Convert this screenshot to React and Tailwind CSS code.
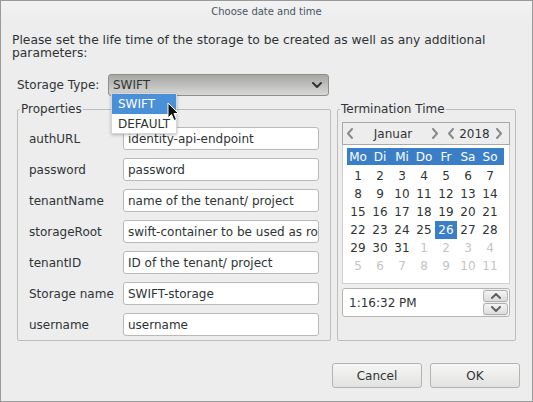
import React from "react";

function Chev({ dir = "left", color = "#8a8a8a", className = "" }) {
  const d = dir === "left" ? "M6 1 L2 5.5 L6 10" : dir === "right" ? "M2 1 L6 5.5 L2 10" : dir === "up" ? "M1 6 L5 2 L9 6" : "M1 2 L5 6 L9 2";
  const vb = dir === "left" || dir === "right" ? "0 0 8 11" : "0 0 10 8";
  const w = dir === "left" || dir === "right" ? 8 : 10;
  const h = dir === "left" || dir === "right" ? 11 : 8;
  return (
    <svg width={w} height={h} viewBox={vb} className={className}>
      <path d={d} fill="none" stroke={color} strokeWidth="2" strokeLinecap="round" strokeLinejoin="round" />
    </svg>
  );
}

const fields = [
  ["authURL", "identity-api-endpoint"],
  ["password", "password"],
  ["tenantName", "name of the tenant/ project"],
  ["storageRoot", "swift-container to be used as root"],
  ["tenantID", "ID of the tenant/ project"],
  ["Storage name", "SWIFT-storage"],
  ["username", "username"],
];

const weekdays = ["Mo", "Di", "Mi", "Do", "Fr", "Sa", "So"];

function buildDays() {
  const cells = [];
  for (let i = 1; i <= 31; i++) cells.push({ n: i, cur: true });
  for (let i = 1; i <= 11; i++) cells.push({ n: i, cur: false });
  return cells;
}

export default function App() {
  const days = buildDays();
  return (
    <div className="relative w-[533px] h-[402px] overflow-hidden bg-[#ededed] border border-[#9a9a9a] text-[#2e3436] font-['DejaVu_Sans',sans-serif] text-[12px] flex flex-col">
      {/* title bar */}
      <div className="h-[21px] flex items-center justify-center text-[10px] text-[#48555f] bg-gradient-to-b from-[#f2f2f2] to-[#ededed]">
        Choose date and time
      </div>

      <div className="flex flex-col px-[11px]">
        <p className="mt-[12px] leading-[13px] text-[12.3px]">
          Please set the life time of the storage to be created as well as any additional
          <br />
          parameters:
        </p>

        {/* storage type */}
        <div className="mt-[14px] flex items-center h-[22px] pl-[5px]">
          <span className="w-[91px]">Storage Type:</span>
          <div className="w-[221px] h-[22px] rounded-[3px] border border-[#8e8f8c] bg-gradient-to-b from-[#a6a8a4] to-[#d8d8d6] flex items-center justify-between pl-[4px] pr-[6px]">
            <span>SWIFT</span>
            <Chev dir="down" color="#2e3436" />
          </div>
        </div>

        {/* fieldsets */}
        <div className="mt-[6px] ml-[5px] flex gap-[6px]">
          <fieldset className="w-[314px] border border-[#bdbdbb] rounded-[2px] pb-[4px]">
            <legend className="ml-[2px] px-[1px] leading-[14px]">Properties</legend>
            <div className="mt-[11px] pl-[11px] pr-[11px] flex flex-col gap-[8px]">
              {fields.map(([label, value]) => (
                <div key={label} className="flex items-center h-[23px]">
                  <span className="w-[94px] shrink-0">{label}</span>
                  <div className="w-[196px] h-[23px] bg-white border border-[#b9b9b6] rounded-[3px] flex items-center pl-[4px] overflow-hidden whitespace-nowrap">
                    {value}
                  </div>
                </div>
              ))}
            </div>
          </fieldset>

          <fieldset className="w-[179px] border border-[#bdbdbb] rounded-[2px]">
            <legend className="ml-[2px] px-[1px] leading-[14px]">Termination Time</legend>
            <div className="pt-[6px] pl-[4px] pr-[5px] flex flex-col">
              <div className="w-[168px] flex flex-col">
                {/* nav bar */}
                <div className="h-[23px] border border-[#a8a8a6] bg-[#ededed] flex items-center">
                  <span className="w-[14px] flex justify-center"><Chev dir="left" /></span>
                  <span className="w-[72px] text-center">Januar</span>
                  <span className="w-[11px] flex justify-center"><Chev dir="right" /></span>
                  <span className="w-[5px]" />
                  <span className="w-[11px] flex justify-center"><Chev dir="left" /></span>
                  <span className="w-[37px] text-center">2018</span>
                  <span className="w-[11px] flex justify-center"><Chev dir="right" /></span>
                </div>
                {/* body */}
                <div className="h-[139px] bg-white border-x border-b border-[#d0d0ce] pt-[3px] pl-[4px]">
                  <div className="w-[157px] h-[17px] bg-[#3b7ec8] text-white">
                    <div className="grid grid-cols-[repeat(7,22px)] h-full items-center">
                      {weekdays.map((w) => (
                        <span key={w} className="text-center">{w}</span>
                      ))}
                    </div>
                  </div>
                  <div className="mt-[2px] grid grid-cols-[repeat(7,22px)] grid-rows-[repeat(6,18px)]">
                    {days.map((d, i) => {
                      const sel = d.cur && d.n === 26;
                      return (
                        <span
                          key={i}
                          className={
                            "flex items-center justify-center " +
                            (sel ? "bg-[#3b7ec8] text-white" : d.cur ? "text-[#2e3436]" : "text-[#c4c4c4]")
                          }
                        >
                          {d.n}
                        </span>
                      );
                    })}
                  </div>
                </div>
                {/* time */}
                <div className="mt-[4px] h-[29px] bg-white border border-[#b4b4b1] rounded-[3px] flex items-center justify-between pl-[6px] pr-[1px]">
                  <span>1:16:32 PM</span>
                  <div className="flex flex-col gap-[1px] self-stretch justify-center bg-[#ededed] px-[0px]">
                    <div className="w-[25px] h-[12px] rounded-[3px] border border-[#b0b0ae] bg-gradient-to-b from-[#f4f4f4] to-[#dcdcdc] flex items-center justify-center">
                      <Chev dir="up" color="#5c6366" />
                    </div>
                    <div className="w-[25px] h-[12px] rounded-[3px] border border-[#b0b0ae] bg-gradient-to-b from-[#f4f4f4] to-[#dcdcdc] flex items-center justify-center">
                      <Chev dir="down" color="#5c6366" />
                    </div>
                  </div>
                </div>
              </div>
            </div>
          </fieldset>
        </div>
      </div>

      {/* buttons */}
      <div className="mt-[22px] flex justify-end gap-[8px] pr-[12px]">
        <button className="w-[90px] h-[25px] rounded-[3px] border border-[#b3b3b0] bg-gradient-to-b from-[#f6f6f6] to-[#e2e2e0] text-[12px]">
          Cancel
        </button>
        <button className="w-[90px] h-[25px] rounded-[3px] border border-[#b3b3b0] bg-gradient-to-b from-[#f6f6f6] to-[#e2e2e0] text-[12px]">
          OK
        </button>
      </div>

      {/* dropdown popup */}
      <div className="absolute left-[110px] top-[92px] w-[66px] bg-white border border-[#d6d6d4] shadow-[0_1px_3px_rgba(0,0,0,0.25)] flex flex-col">
        <div className="h-[20px] bg-[#4a90d9] text-white flex items-center pl-[6px]">SWIFT</div>
        <div className="h-[19px] flex items-center pl-[6px]">DEFAULT</div>
      </div>

      {/* mouse cursor */}
      <svg className="absolute left-[166px] top-[101px]" width="13" height="20" viewBox="0 0 13 20">
        <path d="M1 1 L1 16 L4.5 12.5 L7 18.5 L9.5 17.5 L7 11.5 L11.5 11.5 Z" fill="#111" stroke="#fff" strokeWidth="1" strokeLinejoin="round" />
      </svg>
    </div>
  );
}
